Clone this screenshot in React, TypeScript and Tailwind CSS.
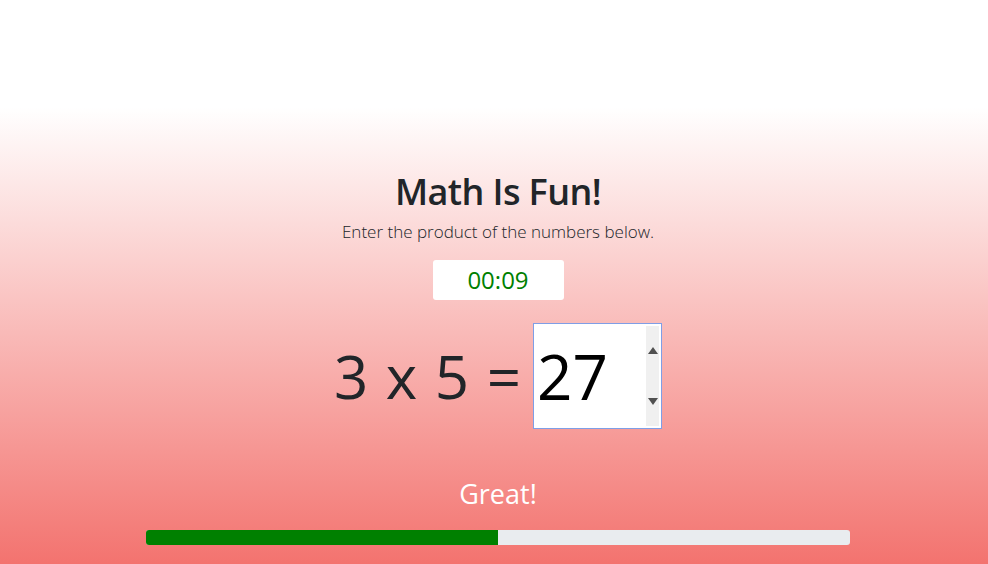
import React from 'react';

const App = () => {
  const progress = 50;
  return (
    <div
      className="min-h-screen w-full bg-[linear-gradient(to_bottom,#ffffff_19%,#f3736f_100%)] pl-[8px] text-[#212529]"
      style={{ fontFamily: '"Open Sans", "Noto Sans", sans-serif' }}
    >
      <div className="mx-auto flex w-[704px] flex-col items-center pt-[169px]">
        <h1 className="text-[36px] font-semibold leading-[46px] tracking-[-0.6px]">Math Is Fun!</h1>
        <p className="mt-[5px] text-[17px] font-light leading-6">Enter the product of the numbers below.</p>

        <div className="mt-[16px] flex h-[40px] w-[131px] items-center justify-center rounded-[3px] bg-white text-[24px] text-[#008000]">
          00:09
        </div>

        <div className="mt-[23px] flex items-center">
          <span className="text-[60px] leading-none tracking-[1px]">3 x 5 =</span>
          <div className="ml-[11px] flex h-[106px] w-[129px] items-center border border-[#7f9ee6] bg-white pl-[3px] pr-[2px]">
            <input
              readOnly
              value="27"
              className="w-full min-w-0 bg-transparent text-[62px] leading-none text-black outline-none"
            />
            <div className="flex h-[100px] w-[13px] shrink-0 flex-col items-center justify-between bg-[#f0f0f0] py-[21px]">
              <svg width="10" height="7" viewBox="0 0 10 7"><path d="M5 0L10 7H0z" fill="#505050" /></svg>
              <svg width="10" height="7" viewBox="0 0 10 7"><path d="M0 0h10L5 7z" fill="#505050" /></svg>
            </div>
          </div>
        </div>

        <div className="mt-[48px] text-[27px] leading-[34px] text-white">Great!</div>

        <div className="mt-[19px] h-[15px] w-full overflow-hidden rounded-[3px] bg-[#e9ecef]">
          <div className="h-full bg-[#008000]" style={{ width: `${progress}%` }} />
        </div>
      </div>
    </div>
  );
};

export default App;
